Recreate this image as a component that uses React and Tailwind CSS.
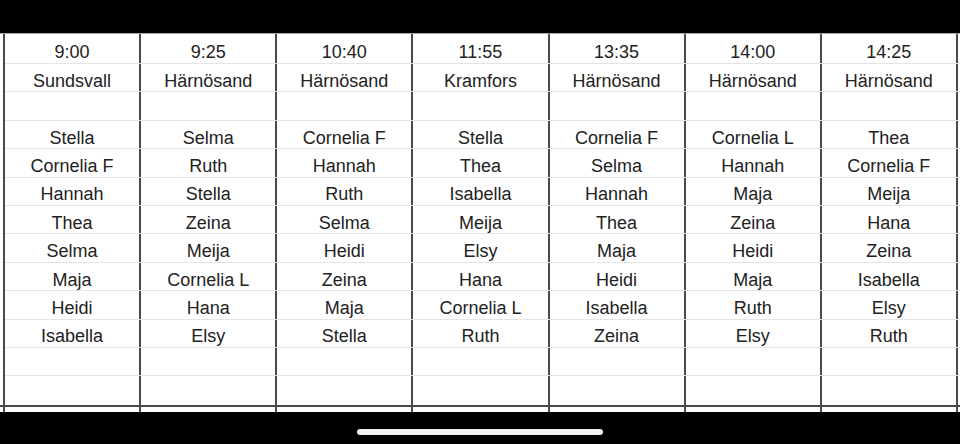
const columns = [
  ["9:00", "Sundsvall", "", "Stella", "Cornelia F", "Hannah", "Thea", "Selma", "Maja", "Heidi", "Isabella", "", ""],
  ["9:25", "Härnösand", "", "Selma", "Ruth", "Stella", "Zeina", "Meija", "Cornelia L", "Hana", "Elsy", "", ""],
  ["10:40", "Härnösand", "", "Cornelia F", "Hannah", "Ruth", "Selma", "Heidi", "Zeina", "Maja", "Stella", "", ""],
  ["11:55", "Kramfors", "", "Stella", "Thea", "Isabella", "Meija", "Elsy", "Hana", "Cornelia L", "Ruth", "", ""],
  ["13:35", "Härnösand", "", "Cornelia F", "Selma", "Hannah", "Thea", "Maja", "Heidi", "Isabella", "Zeina", "", ""],
  ["14:00", "Härnösand", "", "Cornelia L", "Hannah", "Maja", "Zeina", "Heidi", "Maja", "Ruth", "Elsy", "", ""],
  ["14:25", "Härnösand", "", "Thea", "Cornelia F", "Meija", "Hana", "Zeina", "Isabella", "Elsy", "Ruth", "", ""],
];

const rows = columns[0].map((_, r) => columns.map(c => c[r]));

export default function App() {
  return (
    <div
      className="w-[960px] h-[444px] bg-black overflow-hidden flex flex-col"
      style={{ fontFamily: "'Liberation Sans', Arial, sans-serif" }}
    >
      {/* status area */}
      <div className="h-[33px] shrink-0" />

      {/* sheet */}
      <div className="bg-white h-[379px] shrink-0 flex flex-col">
        <div className="border-t border-[#a8a8a8]">
          <div className="ml-[3px] w-[955px] border-l-2 border-[#4a4a4a]">
            {rows.map((row, r) => (
              <div
                key={r}
                className={`flex ${r === 0 ? "h-[30px]" : "h-[28.42px]"} ${r === rows.length - 1 ? "" : "border-b border-[#e4e4e4]"}`}
              >
                {row.map((cell, c) => (
                  <div
                    key={c}
                    className="w-[136.14px] shrink-0 border-r-2 border-[#4a4a4a] flex items-center justify-center pt-[6px] text-[18px] leading-none text-[#222]"
                  >
                    {cell}
                  </div>
                ))}
              </div>
            ))}
          </div>
        </div>

        {/* frozen bottom line + strip */}
        <div className="border-t-2 border-[#4a4a4a]">
          <div className="ml-[3px] w-[955px] h-[5px] border-l-2 border-[#4a4a4a] flex">
            {columns.map((_, c) => (
              <div key={c} className="w-[136.14px] shrink-0 border-r-2 border-[#4a4a4a]" />
            ))}
          </div>
        </div>
      </div>

      {/* home indicator */}
      <div className="flex justify-center pt-[17px]">
        <div className="w-[246px] h-[6px] rounded-full bg-[#f2f2f2]" />
      </div>
    </div>
  );
}
